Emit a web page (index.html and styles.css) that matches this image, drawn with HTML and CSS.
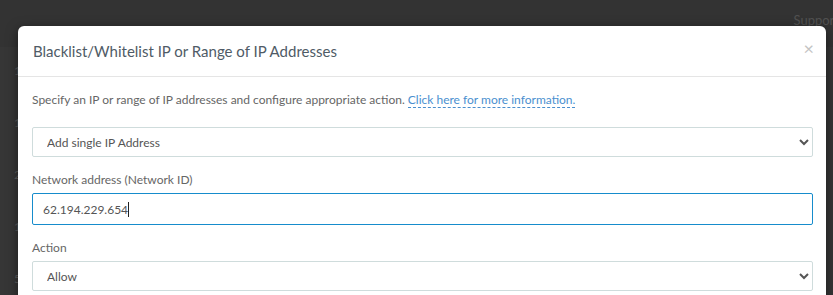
FILE: index.html
```html
<!DOCTYPE html>
<html lang="en">
<head>
  <meta charset="UTF-8">
  <title>IP Access</title>
  <link rel="stylesheet" href="styles.css">
</head>
<body>
  <!-- Page behind the modal -->
  <div class="topbar">
    <span class="topbar-link">Support</span>
  </div>
  <div class="page">
    <div class="page-row">1</div>
    <div class="page-row">1</div>
    <div class="page-row">2</div>
    <div class="page-row">1</div>
    <div class="page-row">5</div>
  </div>

  <div class="backdrop"></div>

  <!-- Modal -->
  <div class="modal">
    <div class="modal-header">
      <h4 class="modal-title">Blacklist/Whitelist IP or Range of IP Addresses</h4>
      <span class="close">&times;</span>
    </div>
    <div class="modal-body">
      <p class="intro">Specify an IP or range of IP addresses and configure appropriate action. <a href="#" class="info-link">Click here for more information.</a></p>

      <div class="form-group">
        <select class="form-control">
          <option>Add single IP Address</option>
        </select>
      </div>

      <div class="form-group">
        <label class="form-label">Network address (Network ID)</label>
        <div class="form-control input-focus"><span>62.194.229.654</span><span class="caret"></span></div>
      </div>

      <div class="form-group">
        <label class="form-label">Action</label>
        <select class="form-control">
          <option>Allow</option>
        </select>
      </div>
    </div>
  </div>
</body>
</html>
```

FILE: styles.css
```css
body {
  margin: 0;
  width: 833px;
  height: 295px;
  overflow: hidden;
  background-color: #5a5a5a;
  font-family: "Lato", "Open Sans", sans-serif;
  position: relative;
}

.topbar {
  height: 47px;
  background-color: #555;
  display: flex;
  justify-content: flex-end;
  align-items: flex-end;
}

.topbar-link {
  color: #888;
  font-size: 13px;
  margin-right: -6px;
  margin-bottom: 19px;
}

.page {
  height: 248px;
  overflow: hidden;
  padding: 16px 0 0 14px;
  box-sizing: border-box;
}

.page-row {
  height: 52px;
  color: #999;
  font-size: 12px;
}

.backdrop {
  position: absolute;
  top: 0;
  left: 0;
  right: 0;
  bottom: 0;
  background-color: rgba(0, 0, 0, 0.4);
}

.modal {
  position: absolute;
  top: 26px;
  left: 18px;
  width: 808px;
  height: 300px;
  background-color: #fff;
  border-radius: 6px;
  box-shadow: 0 3px 12px rgba(0, 0, 0, 0.5);
}

.modal-header {
  display: flex;
  justify-content: space-between;
  align-items: center;
  height: 50px;
  padding: 0 15px;
  border-bottom: 1px solid #e5e5e5;
}

.modal-title {
  margin: 0;
  font-size: 15px;
  font-weight: normal;
  color: #4f5b66;
}

.close {
  font-size: 18px;
  color: #c4c4c4;
  margin-right: -3px;
  margin-top: -7px;
}

.modal-body {
  padding: 15px 14px;
}

.intro {
  margin: 0 0 20px 0;
  font-size: 12px;
  color: #666;
}

.info-link {
  color: #4a8fcf;
  text-decoration: none;
  border-bottom: 1px dashed #4a8fcf;
}

.form-group {
  margin-bottom: 15px;
}

.form-label {
  display: block;
  font-size: 12px;
  color: #666;
  margin-bottom: 6px;
}

.form-control {
  display: flex;
  align-items: center;
  box-sizing: border-box;
  width: 781px;
  height: 30px;
  padding: 0 10px;
  font-family: inherit;
  font-size: 12px;
  color: #555;
  background-color: #fff;
  border: 1px solid #cfdcdc;
  border-radius: 2px;
}

.input-focus {
  height: 32px;
  border-color: #168ccc;
}

.caret {
  display: inline-block;
  width: 1px;
  height: 15px;
  background-color: #222;
}
```
